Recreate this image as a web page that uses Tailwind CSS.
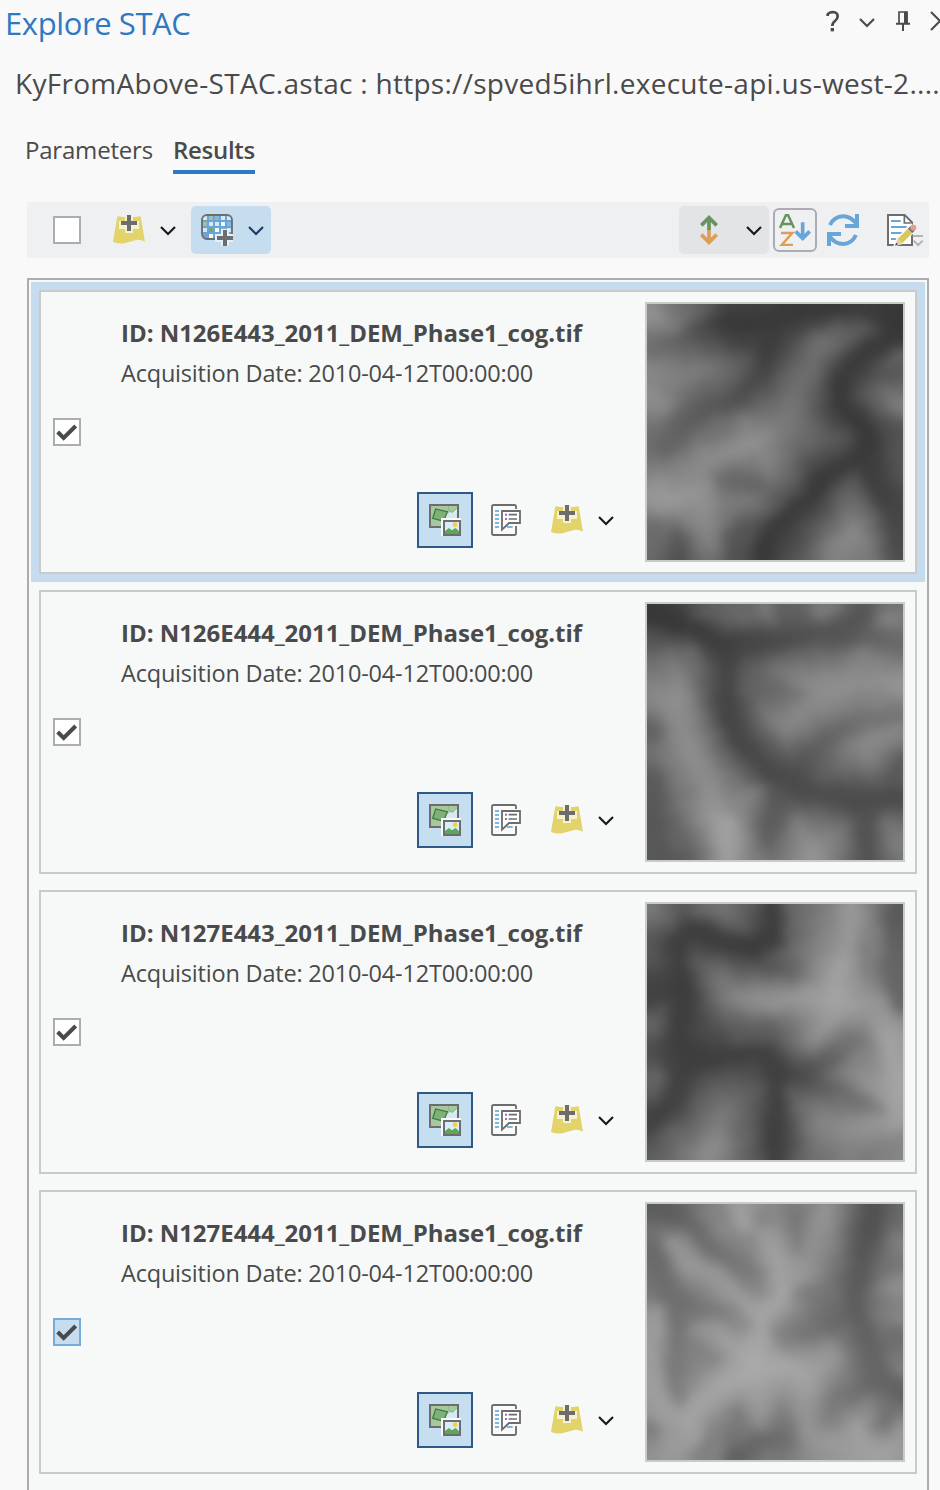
<!DOCTYPE html>
<html lang="en">
<head>
<meta charset="utf-8">
<title>Explore STAC</title>
<script src="https://cdn.jsdelivr.net/npm/@tailwindcss/browser@4"></script>
</head>
<body class="w-[940px] h-[1490px] overflow-hidden bg-[#f9f9f9] text-[#4a4a4a] font-['Open_Sans','Noto_Sans',sans-serif]">

<svg class="hidden">
  <symbol id="add-data" viewBox="0 0 96 96">
    <path d="M13 7Q48 13 83 7L96 83Q78 74 62 80Q46 84 34 88Q16 90 0 84Z" fill="#e2d36b"/>
    <path d="M36 3h24v18h18v24H60v12H36V45H18V21h18z" fill="#f6f2cf"/>
    <path d="M42 3h12v18h18v12H54v18H42V33H24V21h18z" fill="#6d6d6d"/>
  </symbol>
  <symbol id="chev" viewBox="0 0 48 30"><path d="M3 3L24 24L45 3" fill="none" stroke="currentColor" stroke-width="6.5"/></symbol>
  <symbol id="check" viewBox="0 0 72 72"><path d="M8 36L26 54L62 18" fill="none" stroke="#4a4a4a" stroke-width="12"/></symbol>
  <symbol id="footprint" viewBox="0 0 96 96">
    <path d="M3 3h84v66H3z" fill="#a6c79f"/>
    <path d="M52 34L62 24L70 27L87 8v46H36l8-6z" fill="#d6e9f5"/>
    <path d="M57 3L60 19L72 24L87 9" fill="none" stroke="#8cba86" stroke-width="3"/>
    <path d="M20 15L55 23L44 52L11 43Z" fill="#7eb077" stroke="#38763a" stroke-width="3.5"/>
    <path d="M3 3h84v66H3z" fill="none" stroke="#6d6d6d" stroke-width="6"/>
    <path d="M36 42h66v60H36z" fill="#f6fafc"/>
    <path d="M45 51h48v42H45z" fill="#d9edfb" stroke="#6d6d6d" stroke-width="6"/>
    <path d="M48 90V81l12-9 8 7 12-7 10 10v8z" fill="#5ba657"/>
    <circle cx="78" cy="62" r="7" fill="#f3cf45"/>
  </symbol>
  <symbol id="metadata" viewBox="0 0 96 96">
    <path d="M75 15V8Q75 3 70 3H8Q3 3 3 8V88Q3 93 8 93H70Q75 93 75 88V66" fill="#fafafa" stroke="#6d6d6d" stroke-width="5.5"/>
    <path d="M12 21h12M12 33h12M12 45h12M12 57h12M12 69h12M48 69h17" stroke="#7ab8e2" stroke-width="6"/>
    <path d="M33 21h54v36H54L33 77z" fill="#fff" stroke="#6d6d6d" stroke-width="5.5"/>
    <path d="M53 32h25M53 45h25" stroke="#6d6d6d" stroke-width="5"/>
    <path d="M42 32h6M42 45h6" stroke="#8a78b8" stroke-width="6"/>
  </symbol>
</svg>

<header class="flex h-[45px] items-center pl-[5px]">
  <h1 class="grow pt-[2px] text-[31px] leading-[43px] tracking-[-0.4px] text-[#2f79c3]">Explore STAC</h1>
  <div class="flex shrink-0 items-center text-[#4a4a4a]">
    <svg class="w-[14px] h-[22px] mr-[19px] mt-[-3px]" viewBox="0 0 42 66"><path d="M5 18V13Q10 6 21 6Q35 7 35 19Q35 27 27 33Q19 39 19 48" fill="none" stroke="currentColor" stroke-width="8"/><path d="M14 54h10v10h-10z" fill="currentColor"/></svg>
    <svg class="w-4 h-[10px] mr-[21px]"><use href="#chev"/></svg>
    <svg class="w-[14px] h-[20px] mr-[20px] mt-[-3px]" viewBox="0 0 42 60"><path d="M9 36V3h24v33" fill="none" stroke="currentColor" stroke-width="5"/><path d="M24 2h11v34H24zM0 35h42v6H0zM18 40h6v20h-6z" fill="currentColor"/></svg>
    <svg class="w-[10px] h-[20px] mt-[-3px]" viewBox="0 0 30 60"><path d="M3 3L30 30L3 57M57 3L30 30L57 57" fill="none" stroke="currentColor" stroke-width="6"/></svg>
  </div>
</header>

<p class="h-[76px] pl-[15px] text-[28px] leading-[76px] tracking-[0.28px] whitespace-nowrap">KyFromAbove-STAC.astac : https://spved5ihrl.execute-api.us-west-2....</p>

<nav class="mt-[6px] flex h-[47px] gap-[20px] pl-[25px] text-[24px] leading-[45px]">
  <span class="w-[128px] tracking-[-0.2px] whitespace-nowrap">Parameters</span>
  <span class="w-[82px] border-b-4 border-[#2f79c3] font-semibold tracking-[-0.3px] whitespace-nowrap">Results</span>
</nav>

<div class="mt-[28px] ml-[27px] flex h-14 w-[902px] items-center bg-[#eff0f2] pl-[26px]">
  <span class="size-7 border-2 border-[#acadb3] bg-white"></span>
  <svg class="ml-[32px] size-8"><use href="#add-data"/></svg>
  <svg class="ml-[15px] mt-[2px] h-[10px] w-4 text-[#1a1a1a]"><use href="#chev"/></svg>
  <div class="ml-[15px] flex h-12 w-20 items-center rounded-[5px] bg-[#c6dcef] pl-[10px]">
    <svg class="h-8 w-8" viewBox="0 0 96 96">
      <rect x="3" y="3" width="90" height="72" rx="15" fill="#6aa5d8"/>
      <path d="M6 6h12v12H6zM42 6h12v12H42zM60 6h12v12H60zM24 24h12v12H24zM60 24h12v12H60zM6 42h12v12H6zM42 42h12v12H42zM78 42h12v12H78zM24 60h12v12H24zM42 24h12v12H42zM78 6h12v12H78z" fill="#d5e8f6"/>
      <path d="M24 42h12v12H24z" fill="#74a572"/><path d="M24 6h12v12H24zM6 24h12v12H6z" fill="#a3bf9f"/>
      <path d="M42 6h12v12H42zM78 24h12v12H78zM60 42h12v12H60z" fill="#85b7e0"/>
      <path d="M42 42h12v12H42zM24 60h12v12H24zM60 24h12v12H60z" fill="#f4f9fd"/>
      <rect x="3" y="3" width="90" height="72" rx="15" fill="none" stroke="#6d6d6d" stroke-width="5.5"/>
      <path d="M60 45h24v15h18v24H84v14H60V84H42V60h18z" fill="#e6f0f8"/>
      <path d="M66 48h12v18h18v12H78v18H66V78H48V66h18z" fill="#6d6d6d"/>
    </svg>
    <svg class="ml-[15px] mt-[2px] h-[10px] w-4 text-[#1f3a63]"><use href="#chev"/></svg>
  </div>
  <div class="ml-[408px] flex h-12 w-[90px] items-center rounded-[5px] bg-[#e3e4e6] pl-[21px]">
    <svg class="h-8 w-[18px]" viewBox="0 0 54 96"><path d="M27 9V48M4 34L27 11L50 34" stroke="#66935f" stroke-width="11" fill="none"/><path d="M27 48V87M4 62L27 85L50 62" stroke="#dd9d55" stroke-width="11" fill="none"/></svg>
    <svg class="ml-[28px] mt-[2px] h-[10px] w-4 text-[#1a1a1a]"><use href="#chev"/></svg>
  </div>
  <div class="ml-1 flex size-11 items-center justify-center rounded-[6px] border-2 border-[#acadb3] bg-[#eff0f2]">
    <svg class="size-8" viewBox="0 0 96 96"><path d="M3 42L21 3h6L45 42M9 30h30" stroke="#66935f" stroke-width="7.5" fill="none"/><path d="M6 57h34L8 93h34" stroke="#dd9d55" stroke-width="7.5" fill="none"/><path d="M71 25V72M50 52L71 73L92 52" stroke="#6aa5d8" stroke-width="11" fill="none"/></svg>
  </div>
  <svg class="ml-[10px] size-8" viewBox="0 0 96 96"><path d="M9 33Q21 8 48 7Q68 6 87 27M87 63Q75 89 48 90Q26 90 9 69" stroke="#6aa5d8" stroke-width="12" fill="none"/><path d="M84 0h12v42H54V30h30zM0 54h42v12H12v30H0z" fill="#6aa5d8"/></svg>
  <svg class="ml-[28px] h-[36px] w-[38px]" viewBox="0 0 114 108">
    <path d="M3 9H53L75 31V99H3z" fill="#fff" stroke="#6d6d6d" stroke-width="6"/><path d="M52 9V33H75" fill="none" stroke="#6d6d6d" stroke-width="5"/>
    <path d="M12 27h29M12 45h47M12 63h40M12 81h20" stroke="#6aa5d8" stroke-width="5.5"/>
    <path d="M18 104L28 78L72 34L92 52L46 96Z" fill="#f5f5f5"/>
    <path d="M33 80L63 50L76 63L46 93Z" fill="#d9c75a"/><path d="M63 50l7-7 13 13-7 7z" fill="#6d6d6d"/><circle cx="79" cy="47" r="9" fill="#df9f92"/><path d="M33 80L24 101L46 93Z" fill="#e8c9a0"/><path d="M28 92l-4 9 9-4z" fill="#444"/>
    <path d="M77 72h31M80 86l13 13 14-13" stroke="#b2b3b6" stroke-width="6" fill="none"/>
  </svg>
</div>

<main id="results" class="mt-[20px] ml-[27px] h-[1224px] w-[902px] overflow-hidden border-2 border-[#acadb1] bg-[#f7f8f8] p-[2px]"></main>

<template id="row">
  <article class="h-[300px] p-2">
    <div class="flex h-[284px] border-2 border-[#c9caca] bg-[#f7f9f8]">
      <div class="flex w-[80px] items-center pl-[12px]">
        <span class="box size-7 border-2 border-[#acadb1] bg-white"><svg class="size-6"><use href="#check"/></svg></span>
      </div>
      <div class="flex w-[524px] flex-col pt-[21px]">
        <h2 class="h-10 text-[24px] leading-10 font-bold tracking-[-0.03px] whitespace-nowrap"></h2>
        <p class="h-10 text-[23.5px] leading-10 tracking-[-0.2px] whitespace-nowrap">Acquisition Date: 2010-04-12T00:00:00</p>
        <div class="mt-[99px] ml-[296px] flex h-14 items-center">
          <span class="flex size-14 items-center justify-center border-2 border-[#2f5a86] bg-[#c6dff0]"><svg class="size-8"><use href="#footprint"/></svg></span>
          <svg class="ml-[18px] size-8"><use href="#metadata"/></svg>
          <svg class="ml-[28px] size-8"><use href="#add-data"/></svg>
          <svg class="ml-[15px] mt-[2px] h-[10px] w-4 text-[#1a1a1a]"><use href="#chev"/></svg>
        </div>
      </div>
      <canvas width="128" height="128" class="mt-[10px] size-[260px] border-2 border-[#c9caca]"></canvas>
    </div>
  </article>
</template>

<script>
// Terrain lines: each is a run of x,y,gray triples along a ridge or a valley.
const items = [
["N126E443", `240,80,54,330,90,54,400,90,56,480,50,56,600,40,55,720,60,58,770,60,52,790,120,54,700,170,56,640,220,56,610,290,54,620,350,55,680,400,54,700,440,54,660,490,56,560,550,54,520,610,55,440,670,55,390,740,54,370,790,52
680,480,56,700,530,60,740,600,62,780,660,68,790,780,75
400,130,58,390,190,60,370,240,68,300,320,78,200,350,88,130,400,95,90,460,100
240,80,56,160,120,85,60,150,110
700,90,90,560,150,115,500,250,110,465,330,118,440,400,125,350,450,150,220,490,140,180,540,140,190,600,150,210,680,140,220,750,130
440,400,125,540,430,100,640,445,85
40,240,140,100,250,130,190,230,125,290,230,105,340,200,88
40,60,155,100,100,130,150,60,115,220,60,95
40,290,145,90,350,140
190,600,150,90,615,155,40,600,150
350,450,145,330,380,130
380,480,140,410,540,125,460,590,90
270,620,125,350,620,125,410,640,90
640,560,90,650,640,115,655,720,140,590,790,130
655,720,140,700,780,120
795,330,135,720,300,105,680,270,80
795,180,110,750,210,90
250,560,105,370,570,95
130,790,75,130,730,90
60,690,110,50,720,105
320,700,85,300,780,80
795,450,85,795,550,85
300,130,60,340,160,66
250,380,110,220,420,115`],
["N126E444", `33,60,52,110,80,54,190,110,56,260,150,60,280,220,66,270,300,66,280,370,66,320,450,68,400,530,70,480,575,72,560,600,75,660,620,72,800,615,72
260,150,60,380,145,68,480,125,75,600,120,82,650,90,80,690,50,85
600,120,82,700,130,95,800,150,105
320,270,95,420,280,105,510,300,115
470,560,72,530,480,90,600,420,100,680,380,110,800,360,115
690,640,80,695,790,80
420,620,85,400,740,95
40,550,90,50,680,85,80,780,85,150,790,90
33,400,95,50,420,95
45,150,95,60,130,80
60,210,110,120,260,140,120,330,145,140,400,140,160,470,145,210,550,140,220,640,150,270,690,165,280,790,160
350,600,130,290,650,140
50,290,135,110,320,145
170,180,105,120,250,135
150,600,115,200,650,140
130,760,105,100,720,95
340,240,95,430,240,120,520,270,142,620,270,145,720,260,145,800,280,155
560,310,142,480,360,140,460,400,135,400,360,125
520,270,142,560,310,142,640,290,145
680,170,130,670,250,142
600,200,115,620,250,140
740,200,130,740,250,145
560,520,95,620,480,120,690,440,142,760,420,138,800,400,135
690,440,142,700,500,130
470,690,125,530,770,150,590,730,130,620,690,110
530,770,150,530,795,150
750,680,120,790,760,130
380,40,130,400,80,110
540,45,128,600,50,125
770,80,140,730,85,120
200,60,95,330,60,110
470,60,100,470,100,82
640,330,125,740,320,138
800,500,90,770,540,85`],
["N127E443", `410,30,58,410,130,57,340,165,56,260,140,57,180,110,58,130,130,60,140,200,60,145,280,58,130,380,60,130,470,60,200,495,60,300,480,60,390,480,60,430,540,60,420,640,60,415,720,60,420,795,62
145,280,58,80,290,64,35,310,66
150,510,60,130,590,64,80,650,62,35,700,66
430,540,60,510,550,75,580,580,95,650,610,110,730,650,120
510,540,75,600,480,100,680,430,115
790,40,85,770,200,98,795,330,100
160,180,85,250,260,120,310,320,140,400,320,150,500,310,155,600,320,168,720,340,150,760,440,165,780,560,168,785,680,165
600,320,168,610,220,165,640,120,155,640,40,155
600,240,160,500,150,115,460,110,95
600,350,160,540,430,150,520,470,120
640,190,155,560,50,125,480,40,105
40,50,130,100,80,95
200,45,110,270,50,120,330,100,90
35,180,95,60,200,80
35,400,110,90,350,85
60,550,110,40,600,95
200,580,85,260,640,120,250,740,140,200,790,145
360,580,90,270,650,120
330,700,95,270,700,115
100,720,95,180,780,130
470,590,95,560,680,135,640,710,145,790,670,160
640,710,145,560,790,110
600,540,120,640,540,140,700,570,150,780,600,165
680,790,120,795,740,135
700,120,130,690,220,125
700,460,135,650,500,130
400,220,80,480,230,100
330,400,105,320,430,85,420,400,100`],
["N127E444", `40,40,88,130,60,95,200,130,105,260,190,110,340,230,118,370,300,130
50,160,100,90,290,108,130,330,108,250,350,120,340,400,140
130,330,108,120,450,115,120,560,120,130,620,125
710,40,78,690,150,82,665,250,88,660,330,90,690,420,95,720,520,98,800,610,95
660,350,90,590,380,105,500,410,115,420,430,130
480,290,130,560,310,115,600,350,105
480,60,115,490,180,125
720,560,98,600,620,120,560,680,125
440,640,125,440,740,105,370,740,100,290,790,90
300,640,125,300,740,112
380,70,125,350,140,125
180,470,125,240,490,130
795,430,110,740,430,108
50,720,120,40,700,125
190,780,120,240,700,130
720,700,120,760,660,105
110,140,150,160,210,155,240,250,155,320,320,160,370,380,168,360,500,172,340,540,172
310,50,165,340,95,165,400,140,160,430,200,165,440,300,168,380,360,168
570,50,150,520,160,145,490,230,155,440,280,165
60,350,160,50,470,160,50,580,160,100,660,160,160,680,165,220,600,165,330,540,172
340,500,172,260,430,160,190,400,150
370,540,170,370,680,150
370,510,172,450,520,170,510,550,165,510,650,150,530,730,150,600,750,155,750,780,165
510,550,165,600,470,150
690,620,130,665,710,165,700,750,160
795,280,150,720,300,125
795,370,145,720,350,118
795,150,135,760,180,115
795,520,135,760,500,120
160,680,165,180,740,160,100,760,155
790,700,150,770,750,160
390,790,125,420,790,120
220,50,130,260,110,140`]
];

function samples(text) {
  const out = [];
  for (const line of text.trim().split("\n")) {
    const n = line.split(",").map(Number);
    for (let i = 0; i + 5 < n.length; i += 3) {
      const [x, y, v, x2, y2, v2] = n.slice(i, i + 6);
      const k = Math.max(1, Math.round(Math.hypot(x2 - x, y2 - y) / 10));
      for (let j = 0; j <= k; j++) {
        const t = j / k;
        out.push([x + (x2 - x) * t - 33, y + (y2 - y) * t - 30, v + (v2 - v) * t]);
      }
    }
  }
  return out;
}

function drawTerrain(canvas, text) {
  const pts = samples(text), ctx = canvas.getContext("2d"), img = ctx.createImageData(128, 128);
  for (let py = 0; py < 128; py++) for (let px = 0; px < 128; px++) {
    const x0 = px * 6 + 3, y0 = py * 6 + 3;
    const x = x0 + 3 * Math.sin(y0 / 11 + x0 / 31) + 4 * Math.sin(y0 / 29 - x0 / 23);
    const y = y0 + 3 * Math.sin(x0 / 12 - y0 / 37) + 4 * Math.sin(x0 / 31 + y0 / 27);
    let s = 0, w = 0;
    for (const p of pts) {
      const dx = x - p[0], dy = y - p[1], q = Math.pow(dx * dx + dy * dy + 250, -1.4);
      s += q * p[2]; w += q;
    }
    const i = (py * 128 + px) * 4;
    img.data[i] = img.data[i + 1] = img.data[i + 2] = s / w;
    img.data[i + 3] = 255;
  }
  // Two light smoothing passes soften the edges between neighbouring lines.
  for (let pass = 0; pass < 2; pass++) {
    const src = img.data.slice();
    for (let y = 0; y < 128; y++) for (let x = 0; x < 128; x++) {
      let s = 0;
      for (let dy = -2; dy <= 2; dy++) for (let dx = -2; dx <= 2; dx++) {
        const yy = Math.min(127, Math.max(0, y + dy)), xx = Math.min(127, Math.max(0, x + dx));
        s += src[(yy * 128 + xx) * 4];
      }
      const i = (y * 128 + x) * 4;
      img.data[i] = img.data[i + 1] = img.data[i + 2] = s / 25;
    }
  }
  ctx.putImageData(img, 0, 0);
}

items.forEach(([name, terrain], i) => {
  const row = document.getElementById("row").content.cloneNode(true);
  row.querySelector("h2").textContent = `ID: ${name}_2011_DEM_Phase1_cog.tif`;
  if (i === 0) row.querySelector("article").classList.add("bg-[#c6dcee]");
  if (i === 3) {
    const box = row.querySelector(".box");
    box.classList.remove("bg-white", "border-[#acadb1]");
    box.classList.add("bg-[#c6dcef]", "border-[#77abd9]");
  }
  drawTerrain(row.querySelector("canvas"), terrain);
  document.getElementById("results").append(row);
});
</script>
</body>
</html>
